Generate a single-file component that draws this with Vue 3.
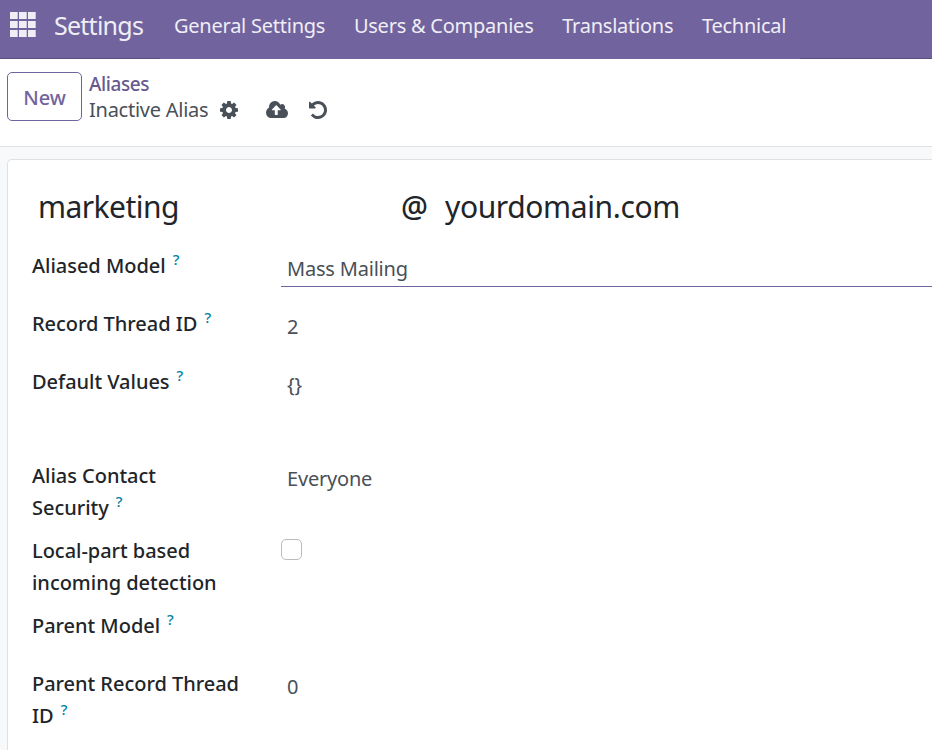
<script setup>
const menus = ['General Settings', 'Users & Companies', 'Translations', 'Technical']
const fields = [
  { id: 'model', lines: ['Aliased Model'], help: true, value: 'Mass Mailing', active: true },
  { id: 'thread', lines: ['Record Thread ID'], help: true, value: '2' },
  { id: 'defaults', lines: ['Default Values'], help: true, value: '{}', tall: true },
  { id: 'contact', lines: ['Alias Contact', 'Security'], help: true, value: 'Everyone' },
  { id: 'local', lines: ['Local-part based', 'incoming detection'], checkbox: true },
  { id: 'parent', lines: ['Parent Model'], help: true, value: '' },
  { id: 'parent-thread', lines: ['Parent Record Thread', 'ID'], help: true, value: '0' },
]
</script>

<template>
  <div class="page">
    <header class="navbar">
      <svg class="apps" width="26" height="25" viewBox="0 0 26 25" fill="#f0eef5">
        <template v-for="r in 3" :key="r">
          <rect v-for="c in 3" :key="c" :x="(c - 1) * 9" :y="(r - 1) * 9" width="7.7" height="7" />
        </template>
      </svg>
      <span class="brand">Settings</span>
      <nav class="menus">
        <a v-for="m in menus" :key="m" class="menu">{{ m }}</a>
      </nav>
    </header>

    <section class="control">
      <button class="new">New</button>
      <div class="crumbs">
        <a class="parent">Aliases</a>
        <div class="current">
          <span class="name">Inactive Alias</span>
          <svg class="gear" width="18" height="18" viewBox="0 0 1536 1536" fill="#495057">
            <path d="M1024 768q0-106-75-181t-181-75-181 75-75 181 75 181 181 75 181-75 75-181zm512-109v222q0 12-8 23t-20 13l-185 28q-19 54-39 91 35 50 107 138 10 12 10 25t-9 23q-27 37-99 108t-94 71q-12 0-26-9l-138-108q-44 23-91 38-16 136-29 186-7 28-36 28H657q-14 0-24.500-8.500T621 1506l-28-184q-49-16-90-37l-141 107q-10 9-25 9-14 0-25-11-126-114-165-168-7-10-7-23 0-12 8-23 15-21 51-66.500t54-70.500q-27-50-41-99L29 913q-13-2-21-12.500T0 877V655q0-12 8-23t19-13l186-28q14-46 39-92-40-57-107-138-10-12-10-24 0-10 9-23 26-36 98.500-107.500T337 135q13 0 26 10l138 107q44-23 91-38 16-136 29-186 7-28 36-28h222q14 0 24.500 8.500T915 30l28 184q49 16 90 37l142-107q9-9 24-9 13 0 25 10 129 119 165 170 7 8 7 22 0 12-8 23-15 21-51 66.500t-54 70.500q26 50 41 98l183 28q13 2 21 12.500t8 23.500z" />
          </svg>
          <svg class="cloud" width="22" height="17" viewBox="0 0 1920 1408" preserveAspectRatio="none" fill="#495057">
            <path d="M1280 736q0-14-9-23L919 361q-9-9-23-9t-23 9L522 712q-10 12-10 24 0 14 9 23t23 9h224v352q0 13 9.500 22.500t22.500 9.500h192q13 0 22.500-9.500t9.500-22.500V768h224q13 0 22.500-9.500t9.500-22.500zm640 288q0 159-112.500 271.500T1536 1408H448q-185 0-316.500-131.500T0 960q0-130 70-240t188-165q-2-30-2-43 0-212 150-362T768 0q156 0 285.500 87T1242 318q71-62 166-62 106 0 181 75t75 181q0 76-41 138 130 31 213.500 135.500T1920 1024z" />
          </svg>
          <svg class="undo" width="18" height="18" viewBox="0 0 1536 1536" fill="#495057">
            <path d="M1536 768q0 156-61 298t-164 245-245 164-298 61q-172 0-327-72.500T177 1259q-7-10-6.500-22.500t8.500-20.500l137-138q10-9 25-9 16 2 23 12 73 95 179 147t225 52q104 0 198.500-40.500T1130 1130t109.500-163.500T1280 768t-40.500-198.500T1130 406 966.500 296.500 768 256q-98 0-188 35.500T420 393l137 138q31 30 14 69-17 40-59 40H64q-26 0-45-19T0 576V128q0-42 40-59 39-17 69 14l130 129Q346 111 483.500 55.500T768 0q156 0 298 61t245 164 164 245 61 298z" />
          </svg>
        </div>
      </div>
    </section>

    <main class="content">
      <section class="sheet">
        <h1 class="alias">
          <span class="local">marketing</span>
          <span class="at">@</span>
          <span class="domain">yourdomain.com</span>
        </h1>
        <div class="fields">
          <div v-for="f in fields" :key="f.id" class="row" :class="{ tall: f.tall, double: f.lines.length > 1 }">
            <label class="label">
              <span v-for="(line, i) in f.lines" :key="line" class="line">{{ line }}<sup v-if="f.help && i === f.lines.length - 1" class="help">?</sup></span>
            </label>
            <span v-if="f.checkbox" class="check"></span>
            <div v-else class="value" :class="{ active: f.active }">{{ f.value }}</div>
          </div>
        </div>
      </section>
    </main>
  </div>
</template>

<style>
body {
  overflow: hidden;
}
</style>

<style scoped>
.page {
  width: 100vw;
  height: 750px;
  display: flex;
  flex-direction: column;
  overflow: hidden;
  background: #f8f9fa;
  font-family: "Noto Sans", "Open Sans", sans-serif;
  font-size: 20px;
  color: #212529;
  white-space: nowrap;
}
.navbar {
  flex: none;
  display: flex;
  height: 59px;
  box-sizing: border-box;
  padding: 0 0 9px 10px;
  align-items: center;
  color: #f0eef5;
  background: linear-gradient(90deg, #5a4f7f 160px, #71639e 160px 800px, #5a4f7f 800px) bottom / 100% 1px no-repeat #71639e;
}
.apps {
  flex: none;
  margin-top: -1px;
}
.brand {
  width: 120px;
  margin-left: 18px;
  font-size: 25px;
  letter-spacing: -0.75px;
}
.menus {
  display: flex;
  gap: 28.7px;
}
.menu {
  letter-spacing: -0.24px;
}
.control {
  flex: none;
  display: flex;
  height: 88px;
  box-sizing: border-box;
  padding: 13px 7px 0;
  border-bottom: 1px solid #dee2e6;
  background: #fff;
}
.new {
  width: 75px;
  height: 49px;
  padding: 1px 0 0;
  border: 1px solid #71639e;
  border-radius: 5px;
  background: #fff;
  color: #71639e;
  font: 500 20px "Noto Sans", sans-serif;
}
.crumbs {
  margin: -1px 0 0 7px;
  line-height: 26px;
}
.parent {
  display: block;
  height: 26px;
  font-weight: 500;
  font-size: 19px;
  letter-spacing: -0.4px;
  color: #66598f;
}
.current {
  display: flex;
  align-items: center;
  height: 26px;
  color: #495057;
}
.name {
  width: 131px;
  letter-spacing: -0.25px;
}
.gear {
  flex: none;
}
.cloud {
  flex: none;
  margin: -1px 0 0 28px;
}
.undo {
  flex: none;
  margin: -1px 0 0 21px;
}
.content {
  flex: 1;
  padding: 12px 0 0 7px;
}
.sheet {
  height: 620px;
  box-sizing: border-box;
  padding: 24px 0 0 24px;
  border: 1px solid #dee2e6;
  border-right: 0;
  border-radius: 5px 0 0 0;
  background: #fff;
}
.alias {
  display: flex;
  margin: 0;
  padding-left: 6px;
  font-size: 30px;
  font-weight: 400;
  line-height: 46px;
}
.local {
  width: 363px;
  letter-spacing: -0.55px;
}
.at {
  width: 44px;
  font-weight: 500;
}
.domain {
  letter-spacing: -0.38px;
}
.fields {
  display: flex;
  flex-direction: column;
  padding-top: 20px;
}
.row {
  display: flex;
  height: 58px;
}
.row.tall {
  height: 94px;
}
.row.double {
  height: 75px;
}
.label {
  width: 249px;
  font-weight: 500;
  letter-spacing: -0.03px;
}
.line {
  display: block;
  height: 32px;
  line-height: 32px;
}
.help {
  margin-left: 7px;
  font-size: 15px;
  line-height: 0;
  vertical-align: 8px;
  color: #0180a5;
}
.value {
  flex: 1;
  height: 37px;
  box-sizing: border-box;
  padding: 3px 6px 0;
  line-height: 32px;
  letter-spacing: -0.2px;
  color: #495057;
}
.value.active {
  border-bottom: 1px solid #71639e;
}
.check {
  width: 21px;
  height: 21px;
  box-sizing: border-box;
  margin-top: 4px;
  border: 1px solid #b9bcc0;
  border-radius: 5px;
}
</style>
